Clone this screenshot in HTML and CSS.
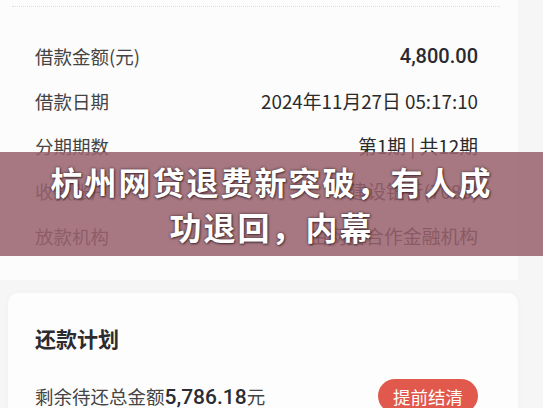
FILE: index.html
```html
<!DOCTYPE html>
<html lang="zh-CN">
<head>
  <meta charset="UTF-8">
  <title>杭州网贷退费新突破</title>
  <link rel="stylesheet" href="styles.css">
</head>
<body>
  <div class="page">
    <div class="card info-card">
      <div class="dash-line"></div>
      <div class="row">
        <span class="label">借款金额(元)</span>
        <span class="value amount">4,800.00</span>
      </div>
      <div class="row">
        <span class="label">借款日期</span>
        <span class="value">2024年11月27日 05:17:10</span>
      </div>
      <div class="row">
        <span class="label">分期期数</span>
        <span class="value">第1期 | 共12期</span>
      </div>
      <div class="row">
        <span class="label">收款账户</span>
        <span class="value">建设银行(7086)</span>
      </div>
      <div class="row">
        <span class="label">放款机构</span>
        <span class="value">由网贷合作金融机构</span>
      </div>
    </div>

    <div class="card plan-card">
      <h2>还款计划</h2>
      <div class="plan-row">
        <span class="remain">剩余待还总金额<b>5,786.18</b>元</span>
        <button class="settle">提前结清</button>
      </div>
    </div>

    <div class="banner">
      <p>杭州网贷退费新突破，有人成<br>功退回，内幕</p>
    </div>
  </div>
</body>
</html>
```

FILE: styles.css
```css
body {
  margin: 0;
  background: #f6f6f7;
  font-family: "Noto Sans CJK SC", "Noto Sans", sans-serif;
  color: #333;
}

.page {
  position: relative;
  width: 543px;
  height: 408px;
  overflow: hidden;
}

.card {
  background: #fcfcfc;
}

.info-card {
  padding-bottom: 22px;
  margin-right: 25px;
}

.dash-line {
  margin: 0 18px 0 12px;
  padding-top: 6px;
  border-bottom: 1px dotted #dedede;
  margin-bottom: 26px;
}

.row {
  display: flex;
  justify-content: space-between;
  align-items: center;
  height: 45px;
  padding: 0 40px 0 35px;
}

.label {
  font-size: 18.5px;
  color: #444;
}

.value {
  font-size: 18.8px;
  color: #2a2a2a;
}

.row .value.amount {
  font-family: Roboto, "Noto Sans CJK SC", sans-serif;
  font-size: 20px;
  font-weight: 500;
  color: #2a2a30;
}

.plan-card {
  margin: 13px 25px 0 8px;
  border-radius: 10px;
  padding: 18px 40px 0 27px;
  background: #fdfdfd;
  box-shadow: 0 0 6px rgba(0, 0, 0, 0.03);
  height: 130px;
}

.plan-card h2 {
  margin: 0;
  font-size: 21px;
  font-weight: 700;
  color: #2b2b30;
  line-height: 54px;
}

.plan-row {
  display: flex;
  justify-content: space-between;
  align-items: center;
  margin-top: 14px;
}

.remain {
  font-size: 18.5px;
  color: #444;
}

.remain b {
  font-family: Roboto, "Noto Sans CJK SC", sans-serif;
  font-weight: 500;
  color: #2b2b33;
  font-size: 21px;
}

.settle {
  width: 100px;
  height: 34px;
  border: none;
  border-radius: 17px;
  background: #e0594c;
  color: #fff;
  font-family: inherit;
  font-size: 17.5px;
}

.banner {
  position: absolute;
  left: 0;
  right: 0;
  top: 152px;
  height: 104px;
  background: rgba(152, 98, 110, 0.86);
  display: flex;
  align-items: center;
  justify-content: center;
}

.banner p {
  margin: 0;
  text-align: center;
  color: #fff;
  font-size: 32px;
  font-weight: 700;
  line-height: 45px;
  letter-spacing: 2px;
  text-shadow: 0 0 3px rgba(40, 20, 25, 0.75), 1px 1px 2px rgba(40, 20, 25, 0.6);
}
```
